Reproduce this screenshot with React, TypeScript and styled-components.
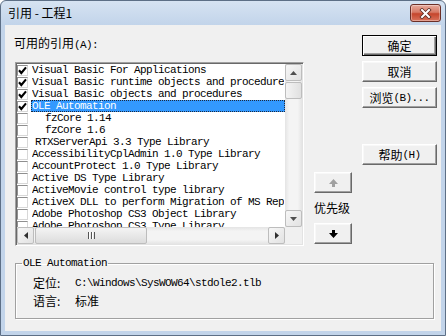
import React from 'react';
import styled, { createGlobalStyle, css } from 'styled-components';

const MONO = `"Liberation Mono", "Noto Sans CJK SC", monospace`;
const CJK = `"Noto Sans CJK SC", "Liberation Sans", sans-serif`;

type RefItem = {
  name: string;
  checked?: boolean;
  selected?: boolean;
  indent?: number;
};

const refs: RefItem[] = [
  { name: 'Visual Basic For Applications', checked: true },
  { name: 'Visual Basic runtime objects and procedures', checked: true },
  { name: 'Visual Basic objects and procedures', checked: true },
  { name: 'OLE Automation', checked: true, selected: true },
  { name: 'fzCore 1.14', indent: 13 },
  { name: 'fzCore 1.6', indent: 13 },
  { name: 'RTXServerApi 3.3 Type Library', indent: 3 },
  { name: 'AccessibilityCplAdmin 1.0 Type Library' },
  { name: 'AccountProtect 1.0 Type Library' },
  { name: 'Active DS Type Library' },
  { name: 'ActiveMovie control type library' },
  { name: 'ActiveX DLL to perform Migration of MS Repository V1 to V2' },
  { name: 'Adobe Photoshop CS3 Object Library' },
  { name: 'Adobe Photoshop CS3 Type Library' },
];

const Arrow = ({ dir, color }: { dir: 'up' | 'down' | 'left' | 'right'; color: string }) => {
  const pts = {
    up: '0,4 3.5,0 7,4',
    down: '0,0 3.5,4 7,0',
    left: '4,0 0,3.5 4,7',
    right: '0,0 4,3.5 0,7',
  }[dir];
  const vertical = dir === 'up' || dir === 'down';
  return (
    <svg width={vertical ? 7 : 4} height={vertical ? 4 : 7} viewBox={vertical ? '0 0 7 4' : '0 0 4 7'}>
      <polygon points={pts} fill={color} />
    </svg>
  );
};

const BigArrow = ({ dir, color }: { dir: 'up' | 'down'; color: string }) => (
  <svg width="9" height="8" viewBox="0 0 9 8">
    <polygon
      points={dir === 'down' ? '3,0 6,0 6,3 9,3 4.5,8 0,3 3,3' : '4.5,0 9,5 6,5 6,8 3,8 3,5 0,5'}
      fill={color}
    />
  </svg>
);

const CheckMark = () => (
  <svg width="9" height="9" viewBox="0 0 9 9">
    <polyline points="1,4.3 3.3,7 8,1.3" fill="none" stroke="#000" strokeWidth="2.1" />
  </svg>
);

export default function App() {
  return (
    <>
      <GlobalStyle />
      <Window>
        <TitleBar>
          <Caption>引用 - 工程1</Caption>
          <CloseButton aria-label="关闭">
            <svg width="13" height="11" viewBox="0 0 13 11">
              <path d="M3 2 L10 9 M10 2 L3 9" stroke="#5a2a22" strokeWidth="3.6" strokeLinecap="square" />
              <path d="M3 2 L10 9 M10 2 L3 9" stroke="#fff" strokeWidth="2" strokeLinecap="square" />
            </svg>
          </CloseButton>
        </TitleBar>
        <Client>
          <MainRow>
            <LeftCol>
              <FieldLabel>
                可用的引用<Acc>(A):</Acc>
              </FieldLabel>
              <ListBox>
                <Rows>
                  {refs.map((r) => (
                    <Row key={r.name}>
                      <CheckBox>{r.checked && <CheckMark />}</CheckBox>
                      <ItemText $selected={!!r.selected} $indent={r.indent ?? 0}>
                        {r.name}
                      </ItemText>
                    </Row>
                  ))}
                </Rows>
                <VScroll>
                  <ScrollArrow>
                    <Arrow dir="up" color="#505050" />
                  </ScrollArrow>
                  <VThumb />
                  <Track />
                  <ScrollArrow>
                    <Arrow dir="down" color="#505050" />
                  </ScrollArrow>
                </VScroll>
                <HScroll>
                  <ScrollArrow>
                    <Arrow dir="left" color="#303030" />
                  </ScrollArrow>
                  <HThumb>
                    <Grip />
                  </HThumb>
                  <Track />
                  <ScrollArrow>
                    <Arrow dir="right" color="#303030" />
                  </ScrollArrow>
                </HScroll>
                <Corner />
              </ListBox>
            </LeftCol>
            <RightArea>
              <ButtonStack>
                <PushButton $isDefault>确定</PushButton>
                <PushButton>取消</PushButton>
                <PushButton>
                  浏览<Acc>(B)...</Acc>
                </PushButton>
                <PushButton $pushed>
                  帮助<Acc>(H)</Acc>
                </PushButton>
              </ButtonStack>
              <PriorityCol>
                <ArrowButton disabled>
                  <BigArrow dir="up" color="#a0a0a0" />
                </ArrowButton>
                <PriorityLabel>优先级</PriorityLabel>
                <ArrowButton>
                  <BigArrow dir="down" color="#000" />
                </ArrowButton>
              </PriorityCol>
            </RightArea>
          </MainRow>
          <GroupBox>
            <Legend>OLE Automation</Legend>
            <InfoRow>
              <InfoKey>定位:</InfoKey>
              <InfoValue>C:\Windows\SysWOW64\stdole2.tlb</InfoValue>
            </InfoRow>
            <InfoRow>
              <InfoKey>语言:</InfoKey>
              <InfoKey>标准</InfoKey>
            </InfoRow>
          </GroupBox>
        </Client>
      </Window>
    </>
  );
}

const GlobalStyle = createGlobalStyle`
  html, body {
    margin: 0;
    padding: 0;
    background: #fff;
  }
  #root {
    width: 446px;
    height: 336px;
  }
`;

const Window = styled.div`
  box-sizing: border-box;
  width: 446px;
  height: 336px;
  display: flex;
  flex-direction: column;
  padding: 0 4px 4px;
  border: 1px solid #5d6f86;
  border-radius: 6px 6px 0 0;
  background: linear-gradient(#d6e3f2 0, #c2d4ea 24px, #c2d4ea 100%);
  font-family: ${CJK};
  color: #000;
`;

const TitleBar = styled.div`
  height: 24px;
  display: flex;
  justify-content: space-between;
  align-items: flex-start;
  padding-left: 3px;
`;

const Caption = styled.div`
  font-size: 12px;
  line-height: 22px;
  margin-top: 1px;
`;

const CloseButton = styled.button`
  box-sizing: border-box;
  width: 31px;
  height: 18px;
  margin-top: 3px;
  padding: 0;
  display: flex;
  align-items: center;
  justify-content: center;
  border: 1px solid #6b2f27;
  border-radius: 3px;
  background: linear-gradient(#e6a99c 0%, #d77a66 45%, #c5452c 55%, #d9735c 100%);
  box-shadow: inset 0 0 0 1px rgba(255, 255, 255, 0.35);
`;

const Client = styled.div`
  flex: 1;
  display: flex;
  flex-direction: column;
  padding: 10px 0 0 10px;
  background: #f0f0f0;
`;

const MainRow = styled.div`
  display: flex;
`;

const LeftCol = styled.div`
  display: flex;
  flex-direction: column;
  width: 289px;
`;

const Acc = styled.span`
  font-family: ${MONO};
  font-size: 11px;
  letter-spacing: -0.6px;
`;

const FieldLabel = styled.div`
  height: 16px;
  line-height: 16px;
  font-size: 12px;
  margin-left: -1px;
  margin-bottom: 11px;
`;

const ListBox = styled.div`
  box-sizing: border-box;
  width: 289px;
  height: 184px;
  display: grid;
  grid-template-columns: 1fr 17px;
  grid-template-rows: 1fr 17px;
  padding: 1px;
  background: #fff;
  border: 1px solid;
  border-color: #a0a0a0 #fff #fff #a0a0a0;
  box-shadow: inset 1px 1px #696969, inset -1px -1px #e3e3e3;
`;

const Rows = styled.div`
  overflow: hidden;
  display: flex;
  flex-direction: column;
`;

const Row = styled.div`
  flex: none;
  height: 12px;
  display: flex;
  align-items: center;
`;

const CheckBox = styled.span`
  box-sizing: border-box;
  flex: none;
  width: 11px;
  height: 11px;
  margin-right: 3px;
  display: flex;
  align-items: center;
  justify-content: center;
  background: #fff;
  border: 1px solid;
  border-color: #8f8f8f #d8d8d8 #d8d8d8 #8f8f8f;
`;

const ItemText = styled.span<{ $selected: boolean; $indent: number }>`
  box-sizing: border-box;
  flex: 1;
  height: 12px;
  padding-left: ${(p) => p.$indent}px;
  font-family: ${MONO};
  font-size: 11px;
  letter-spacing: -0.6px;
  line-height: 10px;
  white-space: pre;
  overflow: hidden;
  border: 1px solid transparent;
  ${(p) =>
    p.$selected &&
    css`
      background: #3399ff;
      color: #fff;
      border: 1px dotted #1d2a40;
    `}
`;

const scrollPiece = css`
  box-sizing: border-box;
  flex: none;
  border: 1px solid #bdbdbd;
  border-radius: 2px;
`;

const VScroll = styled.div`
  display: flex;
  flex-direction: column;
  background: linear-gradient(90deg, #e4e4e4, #f4f4f4 25%, #f4f4f4 75%, #e4e4e4);
`;

const HScroll = styled.div`
  display: flex;
  background: linear-gradient(#e4e4e4, #f4f4f4 25%, #f4f4f4 75%, #e4e4e4);
`;

const ScrollArrow = styled.div`
  ${scrollPiece};
  width: 17px;
  height: 17px;
  display: flex;
  align-items: center;
  justify-content: center;
  background: linear-gradient(135deg, #f7f7f7, #e2e2e2);
`;

const VThumb = styled.div`
  ${scrollPiece};
  height: 17px;
  margin-top: 1px;
  background: linear-gradient(90deg, #f4f4f4, #e0e0e0);
`;

const HThumb = styled.div`
  ${scrollPiece};
  width: 112px;
  margin-left: 1px;
  display: flex;
  align-items: center;
  justify-content: center;
  background: linear-gradient(#f4f4f4, #dcdcdc);
`;

const Grip = styled.span`
  width: 7px;
  height: 7px;
  background: repeating-linear-gradient(90deg, #555 0 1px, #fff 1px 2px, transparent 2px 3px);
`;

const Track = styled.div`
  flex: 1;
`;

const Corner = styled.div`
  background: #f0f0f0;
`;

const RightArea = styled.div`
  width: 123px;
  margin-left: 10px;
  display: flex;
  flex-direction: column;
`;

const ButtonStack = styled.div`
  align-self: flex-end;
  display: flex;
  flex-direction: column;
  gap: 5px;
`;

const bevel = css`
  box-sizing: border-box;
  height: 21px;
  padding: 0;
  display: flex;
  align-items: center;
  justify-content: center;
  background: #f0f0f0;
  font-family: ${CJK};
  font-size: 12px;
  line-height: 16px;
  color: #000;
  border: 1px solid;
  border-color: #fff #696969 #696969 #fff;
  box-shadow: inset -1px -1px #a0a0a0, inset 1px 1px #f8f8f8;
`;

const PushButton = styled.button<{ $isDefault?: boolean; $pushed?: boolean }>`
  ${bevel};
  width: 75px;
  ${(p) =>
    p.$isDefault &&
    css`
      border-color: #000;
      box-shadow: inset 1px 1px #fff, inset -1px -1px #696969, inset -2px -2px #a0a0a0;
    `}
  ${(p) =>
    p.$pushed &&
    css`
      margin-top: 31px;
    `}
`;

const PriorityCol = styled.div`
  width: 38px;
  margin-top: 7px;
  display: flex;
  flex-direction: column;
`;

const ArrowButton = styled.button`
  ${bevel};
  width: 38px;
`;

const PriorityLabel = styled.div`
  height: 30px;
  line-height: 30px;
  font-size: 12px;
  white-space: nowrap;
`;

const GroupBox = styled.fieldset`
  box-sizing: border-box;
  width: 419px;
  margin: 11px 0 0;
  padding: 5px 0 8px 0;
  border: 1px solid #a0a0a0;
  box-shadow: 1px 1px #fff, inset 1px 1px #fff;
  min-width: 0;
`;

const Legend = styled.legend`
  margin-left: 6px;
  padding: 0 1px;
  font-family: ${MONO};
  font-size: 11px;
  letter-spacing: -0.6px;
  line-height: 12px;
`;

const InfoRow = styled.div`
  height: 18px;
  padding-left: 17px;
  display: flex;
  align-items: center;
`;

const InfoKey = styled.span`
  width: 42px;
  font-size: 12px;
  line-height: 16px;
  white-space: nowrap;
`;

const InfoValue = styled.span`
  font-family: ${MONO};
  font-size: 11px;
  letter-spacing: -0.6px;
  white-space: pre;
`;
